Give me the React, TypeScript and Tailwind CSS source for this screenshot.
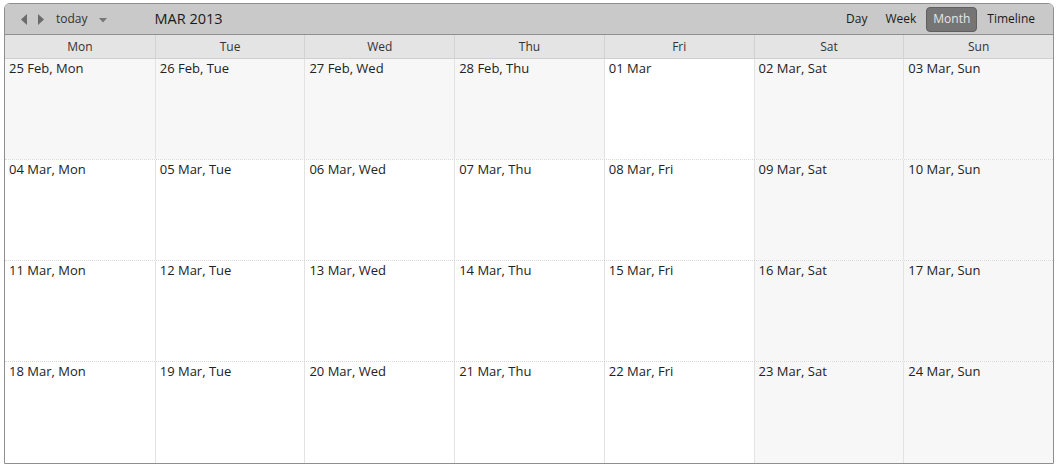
import clsx from "clsx";

const cn = clsx;
const days = ["Mon", "Tue", "Wed", "Thu", "Fri", "Sat", "Sun"];

type Cell = { label: string; muted: boolean };

// March 2013 grid, starting Mon 25 Feb
function buildWeeks(): Cell[][] {
  const weeks: Cell[][] = [];
  const pad = (n: number) => String(n).padStart(2, "0");
  let d = 25;
  let month = "Feb";
  for (let w = 0; w < 4; w++) {
    const row: Cell[] = [];
    for (let i = 0; i < 7; i++) {
      const first = month === "Mar" && d === 1;
      row.push({
        label: first ? `${pad(d)} Mar` : `${pad(d)} ${month}, ${days[i]}`,
        muted: month === "Feb" || i >= 5,
      });
      d++;
      if (month === "Feb" && d > 28) {
        d = 1;
        month = "Mar";
      }
    }
    weeks.push(row);
  }
  return weeks;
}

export default function App() {
  const weeks = buildWeeks();
  return (
    <div className="w-[1062px] h-[473px] bg-white pt-[3px] pl-[4px]" style={{ fontFamily: '"Open Sans", "Noto Sans", sans-serif' }}>
      <div className="w-[1050px] border border-[#8f8f8f] rounded-t-[6px] overflow-hidden">
        {/* toolbar */}
        <div className="h-[31px] bg-[#c9c9c9] border-b border-[#8f8f8f] flex items-center text-[#1a1a1a]">
          <div className="flex items-center gap-[9px] pl-[16px]">
            <svg width="7" height="11" viewBox="0 0 7 11"><path d="M6 0 L0 5.5 L6 11 Z" fill="#6b6b6b" /></svg>
            <svg width="7" height="11" viewBox="0 0 7 11"><path d="M1 0 L7 5.5 L1 11 Z" fill="#6b6b6b" /></svg>
          </div>
          <span className="ml-[12px] text-[12px] text-[#333]">today</span>
          <svg className="ml-[11px] mt-[2px]" width="8" height="5" viewBox="0 0 8 5"><path d="M0 0 L8 0 L4 4.5 Z" fill="#777" /></svg>
          <span className="ml-[48px] text-[14.5px] text-[#1a1a1a]">MAR 2013</span>
          <div className="ml-auto flex items-center text-[12px] text-[#1a1a1a] pr-[18px]">
            <span className="px-[10px]">Day</span>
            <span className="px-[8px]">Week</span>
            <span className="ml-[2px] h-[25px] px-[6px] flex items-center rounded-[4px] bg-[#757575] border border-[#5f5f5f] text-[#e6e6e6]">Month</span>
            <span className="pl-[10px]">Timeline</span>
          </div>
        </div>
        {/* weekday header */}
        <div className="grid grid-cols-7 h-[24px] bg-[#e4e4e4] border-b border-[#cfcfcf]">
          {days.map((d, i) => (
            <div
              key={d}
              className={cn(
                "flex items-center justify-center text-[12px] text-[#333]",
                i > 0 && "border-l border-[#d2d2d2]",
              )}
            >
              {d}
            </div>
          ))}
        </div>
        {/* month grid */}
        {weeks.map((row, w) => (
          <div
            key={w}
            className={cn("grid grid-cols-7 h-[101px]", w < 3 && "border-b border-dotted border-[#d8d8d8]")}
          >
            {row.map((c, i) => (
              <div
                key={i}
                className={cn(
                  "px-[4px] text-[13px] leading-[18px] text-[#222]",
                  c.muted ? "bg-[#f7f7f7]" : "bg-white",
                  i > 0 && "border-l border-[#e3e3e3]",
                )}
              >
                {c.label}
              </div>
            ))}
          </div>
        ))}
      </div>
    </div>
  );
}
